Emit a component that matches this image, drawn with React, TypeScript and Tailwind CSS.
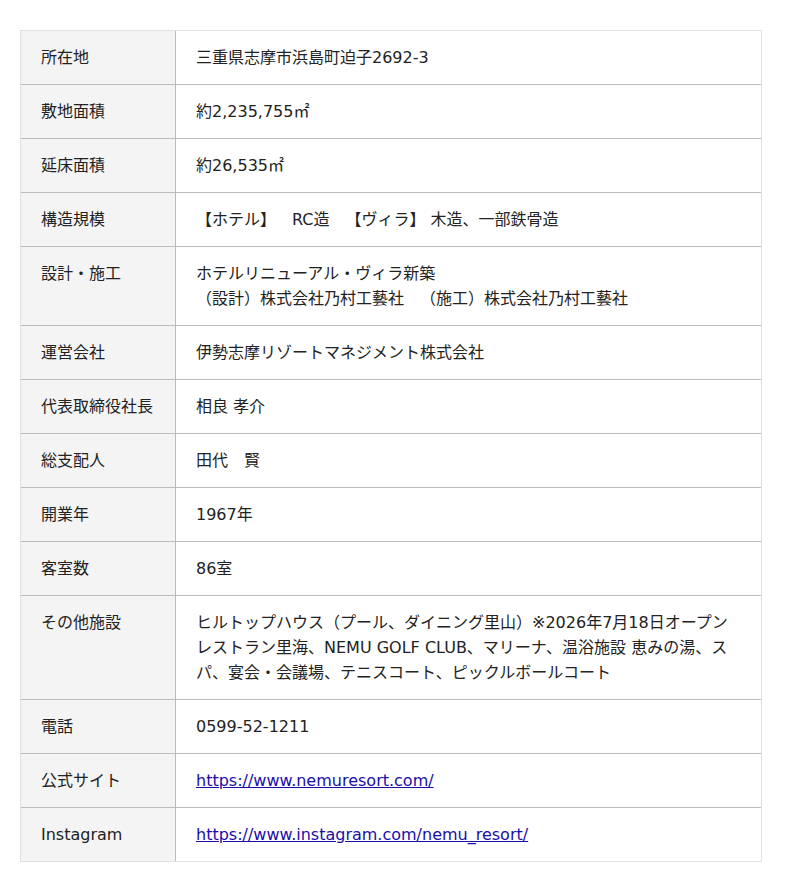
import React from "react";

const rows: { label: string; value: React.ReactNode }[] = [
  { label: "所在地", value: "三重県志摩市浜島町迫子2692-3" },
  { label: "敷地面積", value: "約2,235,755㎡" },
  { label: "延床面積", value: "約26,535㎡" },
  { label: "構造規模", value: "【ホテル】　RC造　【ヴィラ】 木造、一部鉄骨造" },
  {
    label: "設計・施工",
    value: (
      <>
        ホテルリニューアル・ヴィラ新築
        <br />
        （設計）株式会社乃村工藝社　（施工）株式会社乃村工藝社
      </>
    ),
  },
  { label: "運営会社", value: "伊勢志摩リゾートマネジメント株式会社" },
  { label: "代表取締役社長", value: "相良 孝介" },
  { label: "総支配人", value: "田代　賢" },
  { label: "開業年", value: "1967年" },
  { label: "客室数", value: "86室" },
  {
    label: "その他施設",
    value:
      "ヒルトップハウス（プール、ダイニング里山）※2026年7月18日オープンレストラン里海、NEMU GOLF CLUB、マリーナ、温浴施設 恵みの湯、スパ、宴会・会議場、テニスコート、ピックルボールコート",
  },
  { label: "電話", value: "0599-52-1211" },
  {
    label: "公式サイト",
    value: (
      <a href="#" className="text-[#1a0dab] underline">
        https://www.nemuresort.com/
      </a>
    ),
  },
  {
    label: "Instagram",
    value: (
      <a href="#" className="text-[#1a0dab] underline">
        https://www.instagram.com/nemu_resort/
      </a>
    ),
  },
];

export default function App() {
  return (
    <div
      className="min-h-[892px] bg-white px-[20px] pt-[30px] text-[16px] leading-[25px] text-[#222] [text-spacing-trim:space-all]"
      style={{ fontFamily: '"DejaVu Sans", "Noto Sans CJK JP", sans-serif' }}
    >
      <div className="w-[742px] border border-[#e0e0e0]">
        {rows.map((r, i) => (
          <div
            key={r.label}
            className={
              i === rows.length - 1
                ? "flex"
                : "flex border-b border-[#bcbcbc]"
            }
          >
            <div className="w-[155px] shrink-0 border-r border-[#bcbcbc] bg-[#f4f4f4] px-5 py-[14px]">
              {r.label}
            </div>
            <div className="min-w-0 flex-1 break-all px-5 py-[14px]">{r.value}</div>
          </div>
        ))}
      </div>
    </div>
  );
}
